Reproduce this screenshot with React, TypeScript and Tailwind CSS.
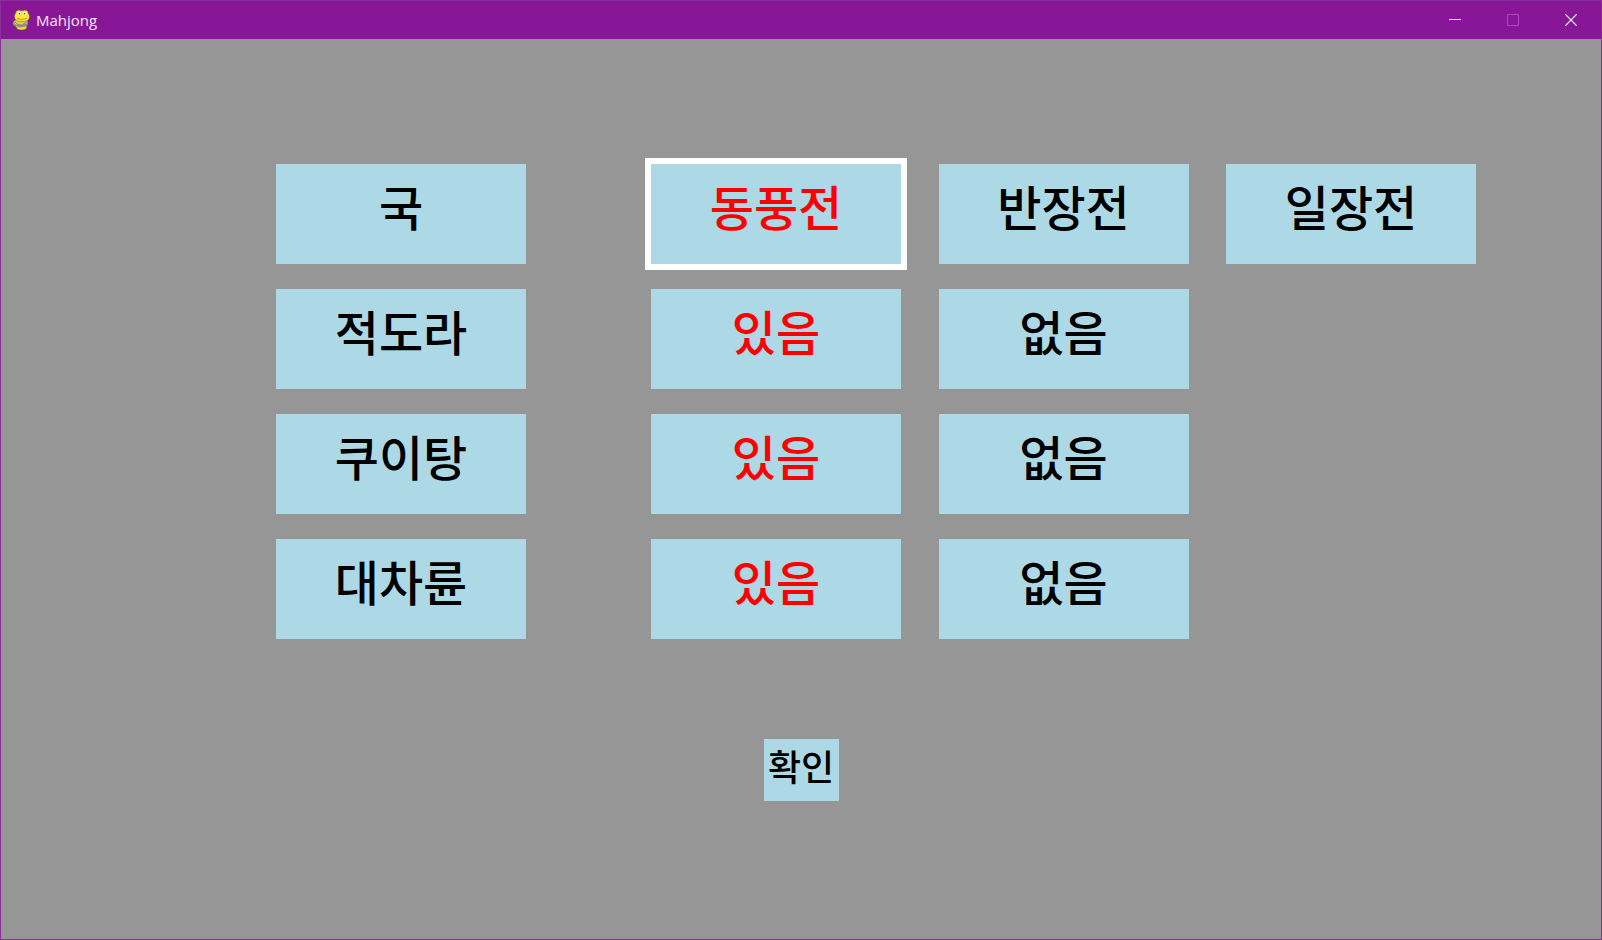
import { useState } from "react";
import clsx from "clsx";

type Rule = { label: string; options: string[] };

const RULES: Rule[] = [
  { label: "국", options: ["동풍전", "반장전", "일장전"] },
  { label: "적도라", options: ["있음", "없음"] },
  { label: "쿠이탕", options: ["있음", "없음"] },
  { label: "대차륜", options: ["있음", "없음"] },
];

const OPTION_COLUMNS = ["col-start-4", "col-start-6", "col-start-8"];

function SnakeIcon() {
  return (
    <svg width="20" height="22" viewBox="0 0 20 22" aria-hidden="true">
      <path d="M5.500 10.500c-2.800.5-3.800 2.500-3.500 4.500.3 1.500 1.500 2 2.500 2.500L6 20c2.500 1.300 7 1.200 9.500-.3.500-1 .5-2 .3-3l1-4.200-2-2z" fill="#e6cf3c" stroke="#5a4a34" strokeWidth="0.700" />
      <path d="M2.300 14.300l2-2 2.200 2.500 4.500.7 3.500-2.700 2.500.2-.3 3.300-3.200 1.500-4.500.5-5-1.300z" fill="#8f8b86" />
      <path d="M3.500 14l2.300 1.500M14.500 13.800l1.500.8" stroke="#ded9cc" strokeWidth="1" />
      <path d="M7 19.500c2.500.7 5 .7 7.500-.2" fill="none" stroke="#f7e850" strokeWidth="1" />
      <path d="M4.500 4.500C4.700 2.300 6 1.200 7.800 1.200c1.300 0 2 .7 3.200.7s2-.8 3.200-.7c1.900.1 3 1.400 3.100 3.400 1.200 1.200 1.400 3.600.8 5.100-.9 2.100-3.700 2.800-7 2.800-3.200 0-6.400-.7-7.200-2.800-.6-1.600-.5-4 .6-5.200z" fill="#fbe53a" stroke="#77652c" strokeWidth="0.500" />
      <ellipse cx="8" cy="4.300" rx="1.800" ry="1.900" fill="#fff8bd" />
      <ellipse cx="14" cy="4.300" rx="1.800" ry="1.900" fill="#fff8bd" />
      <circle cx="8.500" cy="4.700" r="0.800" fill="#4d4426" />
      <circle cx="13.500" cy="4.700" r="0.800" fill="#4d4426" />
      <path d="M6 9.300c3 1.400 7 1.400 10 0" fill="none" stroke="#b08f22" strokeWidth="0.800" />
    </svg>
  );
}

function TitleBar() {
  const control = "flex h-full w-[58px] items-center justify-center";
  return (
    <header className="flex h-[38px] items-center bg-[#881798] pr-px pl-[10px] text-white">
      <SnakeIcon />
      <h1 className="ml-[5px] flex-1 font-['Open_Sans',sans-serif] text-[15px] leading-5 text-[#f8e6fa]">Mahjong</h1>
      <button type="button" aria-label="Minimize" className={control}>
        <svg width="12" height="12" viewBox="0 0 12 12" shapeRendering="crispEdges">
          <path d="M0 5.500h12" stroke="#fff" />
        </svg>
      </button>
      <button type="button" aria-label="Maximize" disabled className={control}>
        <svg width="12" height="12" viewBox="0 0 12 12" fill="none">
          <path d="M.5.5h11v11H.5z" stroke="#b048bd" />
        </svg>
      </button>
      <button type="button" aria-label="Close" className={control}>
        <svg width="12" height="12" viewBox="0 0 12 12">
          <path d="M.3.3l11.400 11.400M11.700.3L.3 11.700" stroke="#fff" strokeWidth="1.200" />
        </svg>
      </button>
    </header>
  );
}

export default function App() {
  const [chosen, setChosen] = useState<number[]>([0, 0, 0, 0]);
  const [focused, setFocused] = useState("0-0");

  const choose = (row: number, option: number) => {
    setChosen((prev) => prev.map((value, i) => (i === row ? option : value)));
    setFocused(`${row}-${option}`);
  };

  const tile = "flex h-[100px] items-center justify-center bg-[#add8e6] pb-3 text-5xl font-medium";

  return (
    <div className="flex min-h-screen flex-col border border-[#8b2f98] bg-[#969696] font-['Noto_Sans','Noto_Sans_CJK_KR',sans-serif]">
      <TitleBar />
      <main className="flex flex-1 flex-col items-center pt-[125px] pb-10 text-black">
        <div className="flex w-full flex-col gap-[25px]">
          {RULES.map((rule, row) => (
            <div
              key={rule.label}
              role="group"
              aria-labelledby={`rule-${row}`}
              className="grid grid-cols-[22fr_20fr_10fr_20fr_3fr_20fr_3fr_20fr_10fr]"
            >
              <h2 id={`rule-${row}`} className={clsx(tile, "col-start-2")}>
                {rule.label}
              </h2>
              {rule.options.map((option, i) => (
                <button
                  key={option}
                  type="button"
                  aria-pressed={chosen[row] === i}
                  onClick={() => choose(row, i)}
                  className={clsx(
                    tile,
                    "row-start-1",
                    OPTION_COLUMNS[i],
                    chosen[row] === i && "text-[#ff0000]",
                    focused === `${row}-${i}` && "ring-6 ring-white",
                  )}
                >
                  {option}
                </button>
              ))}
            </div>
          ))}
        </div>
        <button
          type="button"
          className="mt-[100px] flex h-[62px] w-[75px] items-center justify-center bg-[#add8e6] pb-1 text-4xl font-medium"
        >
          확인
        </button>
      </main>
    </div>
  );
}
